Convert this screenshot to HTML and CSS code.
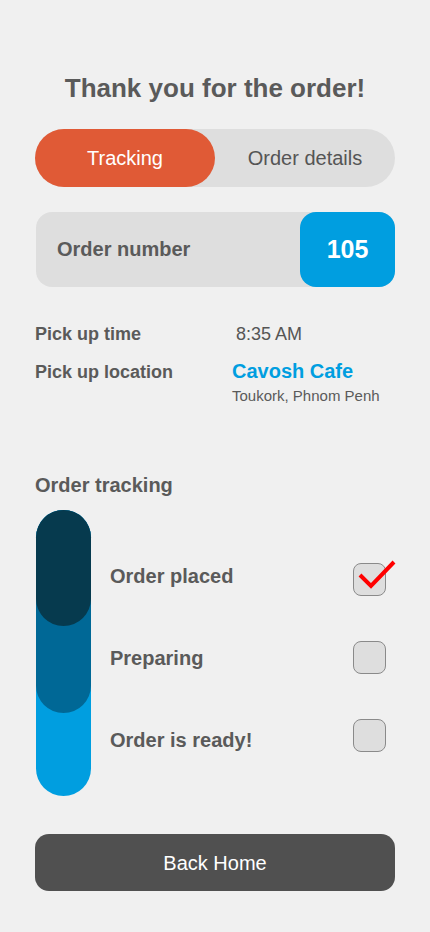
FILE: index.html
```html
<!DOCTYPE html>
<html lang="en">
<head>
<meta charset="utf-8">
<title>Thank you for the order</title>
<link rel="stylesheet" href="styles.css">
</head>
<body>
<main class="page">
  <h1 class="title">Thank you for the order!</h1>

  <div class="segmented">
    <div class="seg seg-active">Tracking</div>
    <div class="seg">Order details</div>
  </div>

  <div class="order-number">
    <span class="on-label">Order number</span>
    <span class="on-value">105</span>
  </div>

  <div class="info">
    <div class="info-row">
      <span class="info-label">Pick up time</span>
      <span class="info-time">8:35 AM</span>
    </div>
    <div class="info-row">
      <span class="info-label">Pick up location</span>
      <div class="info-loc">
        <span class="loc-name">Cavosh Cafe</span>
        <span class="loc-addr">Toukork, Phnom Penh</span>
      </div>
    </div>
  </div>

  <h2 class="section-title">Order tracking</h2>

  <div class="tracker">
    <div class="bar">
      <div class="pill pill-light">
        <div class="pill pill-mid">
          <div class="pill pill-dark"></div>
        </div>
      </div>
    </div>
    <div class="steps">
      <span class="step">Order placed</span>
      <span class="step">Preparing</span>
      <span class="step">Order is ready!</span>
    </div>
    <div class="checks">
      <span class="check checked">
        <svg class="tick" width="32" height="32" viewBox="0 0 32 32"><polyline points="6,11 17,22 40,-2" fill="none" stroke="#ff0000" stroke-width="4"/></svg>
      </span>
      <span class="check"></span>
      <span class="check"></span>
    </div>
  </div>

  <button class="home-btn" type="button">Back Home</button>
</main>
</body>
</html>
```
FILE: styles.css
```css
* { box-sizing: border-box; }
html, body { margin: 0; padding: 0; }
body {
  background: #f0f0f0;
  font-family: "Liberation Sans", Arial, Helvetica, sans-serif;
  color: #5a5a5a;
}
.page {
  width: 430px;
  min-height: 932px;
  padding: 73px 35px 0;
  display: flex;
  flex-direction: column;
}
.title {
  margin: 0;
  font-size: 26px;
  line-height: 30px;
  font-weight: 700;
  text-align: center;
  color: #5a5a5a;
}
.segmented {
  margin-top: 26px;
  height: 58px;
  border-radius: 29px;
  background: #dedede;
  display: grid;
  grid-template-columns: 1fr 1fr;
}
.seg {
  display: flex;
  align-items: center;
  justify-content: center;
  font-size: 20px;
  color: #555;
  border-radius: 29px;
}
.seg-active {
  background: #e05a36;
  color: #fff;
}
.order-number {
  margin-top: 25px;
  margin-left: 1px;
  height: 75px;
  border-radius: 16px;
  background: #dedede;
  display: flex;
  align-items: center;
  justify-content: space-between;
}
.on-label {
  padding-left: 21px;
  font-size: 20px;
  font-weight: 700;
  color: #5a5a5a;
}
.on-value {
  width: 95px;
  height: 100%;
  border-radius: 16px;
  background: #009ee0;
  color: #fff;
  font-size: 25px;
  font-weight: 700;
  display: flex;
  align-items: center;
  justify-content: center;
}
.info {
  margin-top: 36px;
  display: flex;
  flex-direction: column;
  gap: 15px;
}
.info-row {
  display: grid;
  grid-template-columns: 197px 1fr;
  align-items: baseline;
}
.info-label {
  font-size: 18px;
  line-height: 22px;
  font-weight: 700;
  color: #5a5a5a;
}
.info-time {
  padding-left: 4px;
  font-size: 18px;
  line-height: 22px;
  color: #555;
}
.info-loc {
  display: flex;
  flex-direction: column;
  gap: 5px;
}
.loc-name {
  font-size: 20px;
  line-height: 22px;
  font-weight: 700;
  color: #009ee0;
}
.loc-addr {
  font-size: 15px;
  line-height: 18px;
  color: #5a5a5a;
}
.section-title {
  margin: 68px 0 0;
  font-size: 20px;
  line-height: 24px;
  font-weight: 700;
  color: #5a5a5a;
}
.tracker {
  margin-top: 13px;
  display: flex;
  align-items: flex-start;
}
.bar {
  margin-left: 1px;
  width: 55px;
  flex: none;
}
.pill {
  width: 55px;
  border-radius: 27.5px;
}
.pill-light { height: 286px; background: #009ee0; }
.pill-mid { height: 203px; background: #006896; }
.pill-dark { height: 116px; background: #063a4e; }
.steps {
  margin-left: 19px;
  padding-top: 54px;
  flex: 1;
  display: flex;
  flex-direction: column;
  gap: 58px;
}
.step {
  font-size: 20px;
  line-height: 24px;
  font-weight: 700;
  color: #5a5a5a;
}
.checks {
  padding-top: 53px;
  margin-right: 9px;
  display: flex;
  flex-direction: column;
  gap: 45px;
}
.check {
  position: relative;
  display: block;
  width: 33px;
  height: 33px;
  border: 1px solid #8a8a8a;
  border-radius: 8px;
  background: #dedede;
}
.tick {
  position: absolute;
  left: 0;
  top: 0;
  overflow: visible;
}
.home-btn {
  margin-top: 38px;
  height: 57px;
  border: none;
  border-radius: 14px;
  background: #505050;
  color: #fff;
  font-family: inherit;
  font-size: 20px;
  padding: 2px 0 0;
}
```
